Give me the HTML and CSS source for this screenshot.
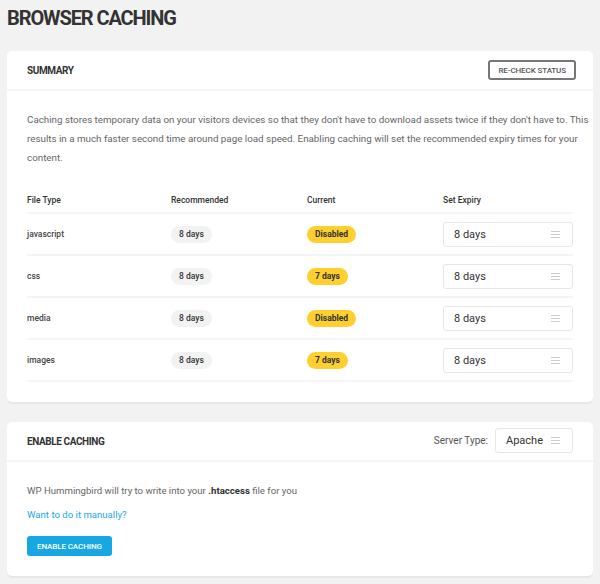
FILE: index.html
```html
<!DOCTYPE html>
<html lang="en">
<head>
  <meta charset="UTF-8">
  <title>Browser Caching</title>
  <link rel="stylesheet" href="styles.css">
</head>
<body>
  <h1 class="page-title">BROWSER CACHING</h1>

  <div class="box">
    <div class="box-header">
      <h2>SUMMARY</h2>
      <button class="btn-ghost">RE-CHECK STATUS</button>
    </div>
    <div class="box-body">
      <p class="intro">Caching stores temporary data on your visitors devices so that they don't have to download assets twice if they don't have to. This results in a much faster second time around page load speed. Enabling caching will set the recommended expiry times for your content.</p>

      <div class="table">
        <div class="row head">
          <span>File Type</span>
          <span>Recommended</span>
          <span>Current</span>
          <span>Set Expiry</span>
        </div>
        <div class="row">
          <span>javascript</span>
          <span><span class="pill">8 days</span></span>
          <span><span class="pill warn">Disabled</span></span>
          <span><div class="select"><span>8 days</span><i class="burger"></i></div></span>
        </div>
        <div class="row">
          <span>css</span>
          <span><span class="pill">8 days</span></span>
          <span><span class="pill warn">7 days</span></span>
          <span><div class="select"><span>8 days</span><i class="burger"></i></div></span>
        </div>
        <div class="row">
          <span>media</span>
          <span><span class="pill">8 days</span></span>
          <span><span class="pill warn">Disabled</span></span>
          <span><div class="select"><span>8 days</span><i class="burger"></i></div></span>
        </div>
        <div class="row">
          <span>images</span>
          <span><span class="pill">8 days</span></span>
          <span><span class="pill warn">7 days</span></span>
          <span><div class="select"><span>8 days</span><i class="burger"></i></div></span>
        </div>
      </div>
    </div>
  </div>

  <div class="box">
    <div class="box-header">
      <h2>ENABLE CACHING</h2>
      <div class="server">
        <label>Server Type:</label>
        <div class="select small"><span>Apache</span><i class="burger"></i></div>
      </div>
    </div>
    <div class="box-body">
      <p class="note">WP Hummingbird will try to write into your <strong>.htaccess</strong> file for you</p>
      <a class="manual" href="#">Want to do it manually?</a>
      <button class="btn-blue">ENABLE CACHING</button>
    </div>
  </div>
</body>
</html>
```

FILE: styles.css
```css
body {
  margin: 0;
  padding: 0 7px;
  background-color: #f2f2f2;
  color: #666;
  font-family: Roboto, "Noto Sans", sans-serif;
}

.page-title {
  margin: 0;
  padding-top: 6px;
  height: 45px;
  font-size: 20px;
  font-weight: 700;
  letter-spacing: -1.1px;
  color: #333;
  line-height: 24px;
}

.box {
  background: #fff;
  border-radius: 5px;
  box-shadow: 0 2px 0 #e8e8e8;
  margin-bottom: 20px;
}

.box-header {
  display: flex;
  align-items: center;
  justify-content: space-between;
  height: 38px;
  padding: 0 17px 0 20px;
  border-bottom: 2px solid #f4f4f4;
}

.box-header h2 {
  margin: 0;
  font-size: 10px;
  font-weight: 700;
  letter-spacing: -0.4px;
  color: #333;
}

.btn-ghost {
  background: #fff;
  border: 2px solid #777;
  border-radius: 3px;
  height: 20px;
  padding: 0 8px;
  font-family: inherit;
  font-size: 8px;
  font-weight: 500;
  letter-spacing: -0.1px;
  color: #555;
}

.box-body {
  padding: 19px 20px 20px;
}

.intro {
  margin: 0 -19px 28px 0;
  font-size: 9.8px;
  line-height: 19px;
  color: #666;
}

.row {
  display: grid;
  grid-template-columns: 144px 136px 136px 1fr;
  align-items: center;
  height: 40px;
  border-bottom: 2px solid #f4f4f4;
  font-size: 8.5px;
  font-weight: 500;
  color: #444;
}

.row.head {
  height: 17px;
  align-items: start;
  color: #333;
}

.pill {
  display: inline-block;
  height: 17px;
  line-height: 17px;
  padding: 0 8px;
  border-radius: 9px;
  background: #f2f2f2;
  color: #333;
}

.pill.warn {
  background: #fecf2f;
  font-weight: 700;
}

.select {
  display: flex;
  align-items: center;
  justify-content: space-between;
  height: 23px;
  padding: 0 12px 0 10px;
  border: 1px solid #e6e6e6;
  border-radius: 3px;
  font-size: 11px;
  font-weight: 400;
  color: #333;
}

.burger {
  width: 9px;
  height: 7px;
  border-top: 1px solid #ccc;
  border-bottom: 1px solid #ccc;
  position: relative;
  box-sizing: border-box;
}

.burger::after {
  content: "";
  position: absolute;
  left: 0;
  right: 0;
  top: 2px;
  border-top: 1px solid #ccc;
}

.server {
  display: flex;
  align-items: center;
  gap: 7px;
  margin-top: -2px;
  margin-right: 3px;
}

.server label {
  font-size: 10px;
  color: #555;
}

.select.small {
  width: 54px;
  height: 23px;
  padding: 0 12px 0 10px;
}

.note {
  margin: 0 0 5px;
  font-size: 9.6px;
  line-height: 19px;
  color: #666;
}

.note strong {
  color: #333;
}

.manual {
  display: block;
  font-size: 9.6px;
  line-height: 19px;
  color: #17a8e3;
  text-decoration: none;
  margin-bottom: 12px;
}

.btn-blue {
  display: block;
  height: 20px;
  padding: 0 10px;
  border: none;
  border-radius: 3px;
  background: #17a8e3;
  color: #fff;
  font-family: inherit;
  font-size: 8px;
  font-weight: 500;
  letter-spacing: -0.1px;
}
```
